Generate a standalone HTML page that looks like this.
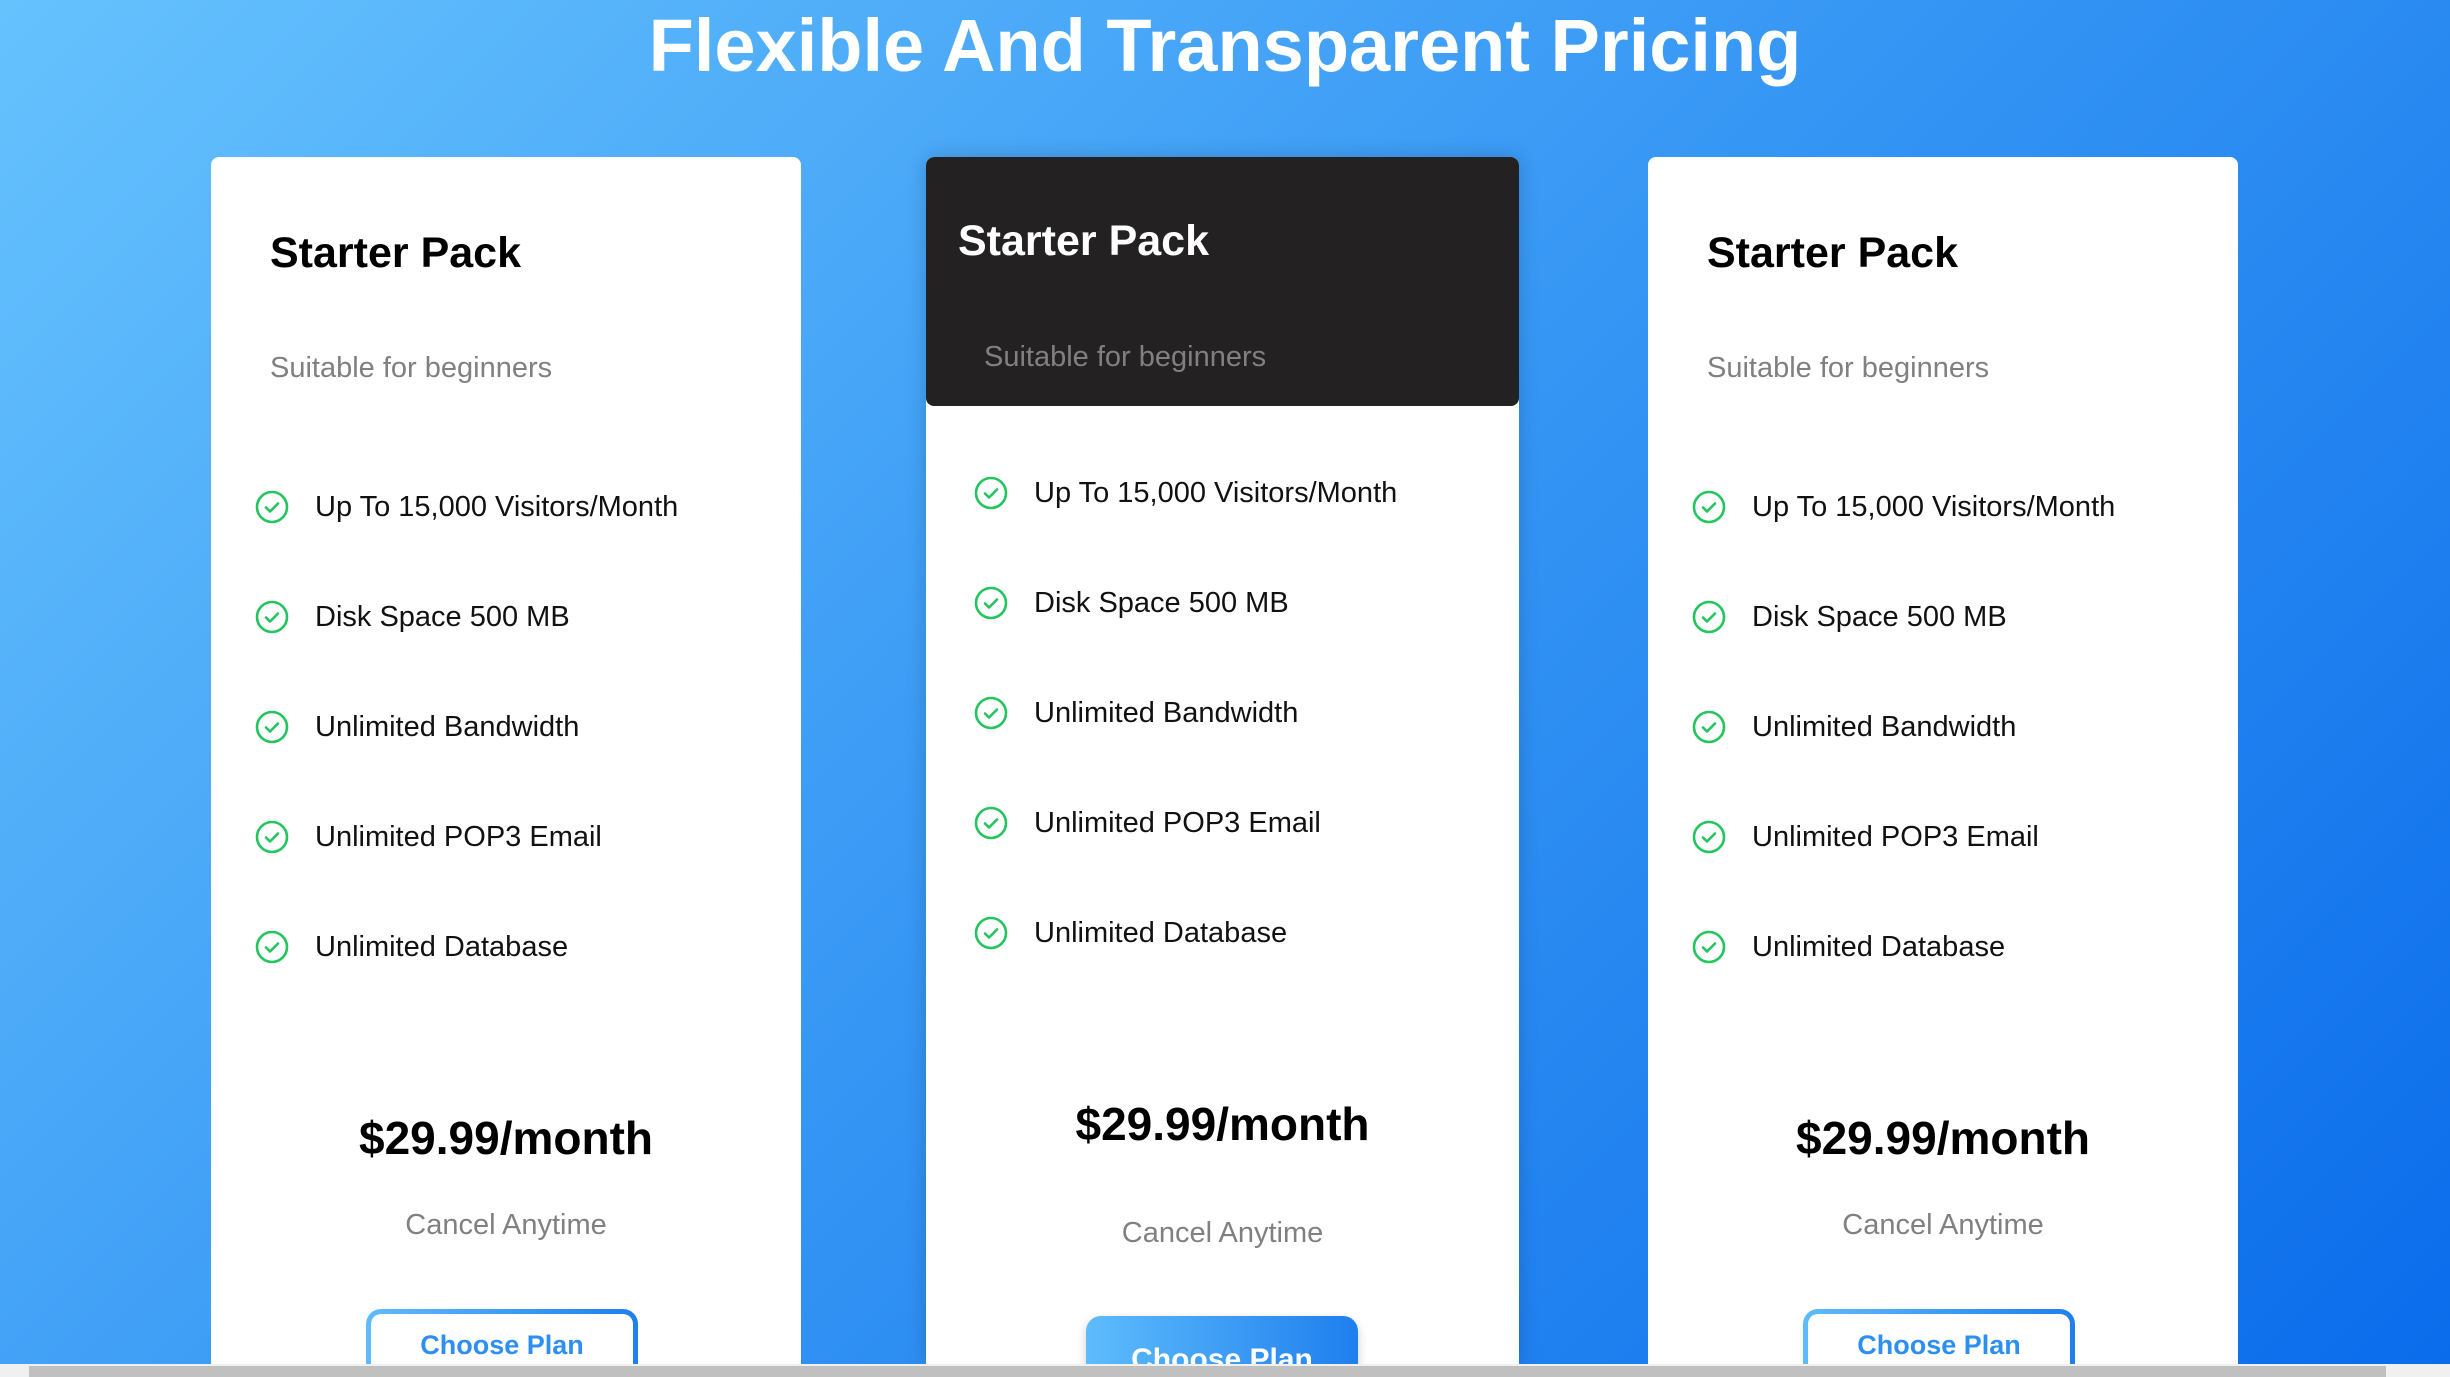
<!DOCTYPE html>
<html><head><style>
*{margin:0;padding:0;box-sizing:border-box}
html,body{width:2450px;height:1377px;overflow:hidden}
body{position:relative;background:linear-gradient(135deg,#66c2fd 0%,#3a9af5 45%,#0a6ceb 100%);font-family:"Liberation Sans",sans-serif}
h1{position:absolute;left:0;width:2450px;top:3px;text-align:center;color:#fff;font-size:74px;font-weight:bold}
.card{position:absolute;top:157px;width:590px;height:1207px;background:#fff;border-radius:8px 8px 0 0;overflow:hidden}
.card .t{position:absolute;left:59px;font-size:43px;font-weight:bold;color:#000}
.card .s{position:absolute;left:59px;font-size:29px;color:#808080}
.feat{position:absolute;left:44px;font-size:29px;color:#111}
.feat svg{position:absolute;left:0;top:-16px}
.feat span{position:absolute;left:60px;top:-15px;white-space:nowrap}
.price{position:absolute;left:0;width:100%;text-align:center;font-size:46px;font-weight:bold;color:#000}
.cancel{position:absolute;left:0;width:100%;text-align:center;font-size:29px;color:#808080}
.btn{position:absolute;width:272px;height:80px;border-radius:15px;padding:5px;background:linear-gradient(90deg,#5ebcfc,#1f7fee)}
.btn div{width:100%;height:100%;background:#fff;border-radius:10px;text-align:center;font-size:27px;font-weight:bold;color:#2d8ff2;padding-top:16px}
.dark{position:absolute;left:0;top:0;width:100%;height:249px;background:#232122;border-radius:8px}
</style></head><body>
<h1>Flexible And Transparent Pricing</h1>

<div class="card" style="left:211px">
 <div class="t" style="top:72px">Starter Pack</div>
 <div class="s" style="top:195px">Suitable for beginners</div>
 <div class="feat" style="top:349px"><svg width="34" height="34" viewBox="0 0 34 34"><circle cx="17" cy="17" r="15" fill="none" stroke="#22c55e" stroke-width="2.6"/><path d="M11 17.5l4 4 8-8" fill="none" stroke="#22c55e" stroke-width="2.6" stroke-linecap="round" stroke-linejoin="round"/></svg><span>Up To 15,000 Visitors/Month</span></div>
 <div class="feat" style="top:459px"><svg width="34" height="34" viewBox="0 0 34 34"><circle cx="17" cy="17" r="15" fill="none" stroke="#22c55e" stroke-width="2.6"/><path d="M11 17.5l4 4 8-8" fill="none" stroke="#22c55e" stroke-width="2.6" stroke-linecap="round" stroke-linejoin="round"/></svg><span>Disk Space 500 MB</span></div>
 <div class="feat" style="top:569px"><svg width="34" height="34" viewBox="0 0 34 34"><circle cx="17" cy="17" r="15" fill="none" stroke="#22c55e" stroke-width="2.6"/><path d="M11 17.5l4 4 8-8" fill="none" stroke="#22c55e" stroke-width="2.6" stroke-linecap="round" stroke-linejoin="round"/></svg><span>Unlimited Bandwidth</span></div>
 <div class="feat" style="top:679px"><svg width="34" height="34" viewBox="0 0 34 34"><circle cx="17" cy="17" r="15" fill="none" stroke="#22c55e" stroke-width="2.6"/><path d="M11 17.5l4 4 8-8" fill="none" stroke="#22c55e" stroke-width="2.6" stroke-linecap="round" stroke-linejoin="round"/></svg><span>Unlimited POP3 Email</span></div>
 <div class="feat" style="top:789px"><svg width="34" height="34" viewBox="0 0 34 34"><circle cx="17" cy="17" r="15" fill="none" stroke="#22c55e" stroke-width="2.6"/><path d="M11 17.5l4 4 8-8" fill="none" stroke="#22c55e" stroke-width="2.6" stroke-linecap="round" stroke-linejoin="round"/></svg><span>Unlimited Database</span></div>
 <div class="price" style="top:954px">$29.99/month</div>
 <div class="cancel" style="top:1052px">Cancel Anytime</div>
 <div class="btn" style="left:155px;top:1152px"><div>Choose Plan</div></div>
</div>

<div class="card" style="left:926px;width:593px;box-shadow:0 0 20px rgba(0,0,0,0.18)">
 <div class="dark"></div>
 <div class="t" style="top:60px;left:32px;color:#fff">Starter Pack</div>
 <div class="s" style="top:184px;left:58px">Suitable for beginners</div>
 <div class="feat" style="top:335px;left:48px"><svg width="34" height="34" viewBox="0 0 34 34"><circle cx="17" cy="17" r="15" fill="none" stroke="#22c55e" stroke-width="2.6"/><path d="M11 17.5l4 4 8-8" fill="none" stroke="#22c55e" stroke-width="2.6" stroke-linecap="round" stroke-linejoin="round"/></svg><span>Up To 15,000 Visitors/Month</span></div>
 <div class="feat" style="top:445px;left:48px"><svg width="34" height="34" viewBox="0 0 34 34"><circle cx="17" cy="17" r="15" fill="none" stroke="#22c55e" stroke-width="2.6"/><path d="M11 17.5l4 4 8-8" fill="none" stroke="#22c55e" stroke-width="2.6" stroke-linecap="round" stroke-linejoin="round"/></svg><span>Disk Space 500 MB</span></div>
 <div class="feat" style="top:555px;left:48px"><svg width="34" height="34" viewBox="0 0 34 34"><circle cx="17" cy="17" r="15" fill="none" stroke="#22c55e" stroke-width="2.6"/><path d="M11 17.5l4 4 8-8" fill="none" stroke="#22c55e" stroke-width="2.6" stroke-linecap="round" stroke-linejoin="round"/></svg><span>Unlimited Bandwidth</span></div>
 <div class="feat" style="top:665px;left:48px"><svg width="34" height="34" viewBox="0 0 34 34"><circle cx="17" cy="17" r="15" fill="none" stroke="#22c55e" stroke-width="2.6"/><path d="M11 17.5l4 4 8-8" fill="none" stroke="#22c55e" stroke-width="2.6" stroke-linecap="round" stroke-linejoin="round"/></svg><span>Unlimited POP3 Email</span></div>
 <div class="feat" style="top:775px;left:48px"><svg width="34" height="34" viewBox="0 0 34 34"><circle cx="17" cy="17" r="15" fill="none" stroke="#22c55e" stroke-width="2.6"/><path d="M11 17.5l4 4 8-8" fill="none" stroke="#22c55e" stroke-width="2.6" stroke-linecap="round" stroke-linejoin="round"/></svg><span>Unlimited Database</span></div>
 <div class="price" style="top:940px">$29.99/month</div>
 <div class="cancel" style="top:1060px">Cancel Anytime</div>
 <div class="btn" style="left:160px;top:1159px;width:272px;height:90px;box-shadow:0 4px 10px rgba(0,0,0,0.2)"><div style="background:transparent;color:#fff;font-size:30px;padding-top:22px">Choose Plan</div></div>
</div>

<div class="card" style="left:1648px">
 <div class="t" style="top:72px">Starter Pack</div>
 <div class="s" style="top:195px">Suitable for beginners</div>
 <div class="feat" style="top:349px"><svg width="34" height="34" viewBox="0 0 34 34"><circle cx="17" cy="17" r="15" fill="none" stroke="#22c55e" stroke-width="2.6"/><path d="M11 17.5l4 4 8-8" fill="none" stroke="#22c55e" stroke-width="2.6" stroke-linecap="round" stroke-linejoin="round"/></svg><span>Up To 15,000 Visitors/Month</span></div>
 <div class="feat" style="top:459px"><svg width="34" height="34" viewBox="0 0 34 34"><circle cx="17" cy="17" r="15" fill="none" stroke="#22c55e" stroke-width="2.6"/><path d="M11 17.5l4 4 8-8" fill="none" stroke="#22c55e" stroke-width="2.6" stroke-linecap="round" stroke-linejoin="round"/></svg><span>Disk Space 500 MB</span></div>
 <div class="feat" style="top:569px"><svg width="34" height="34" viewBox="0 0 34 34"><circle cx="17" cy="17" r="15" fill="none" stroke="#22c55e" stroke-width="2.6"/><path d="M11 17.5l4 4 8-8" fill="none" stroke="#22c55e" stroke-width="2.6" stroke-linecap="round" stroke-linejoin="round"/></svg><span>Unlimited Bandwidth</span></div>
 <div class="feat" style="top:679px"><svg width="34" height="34" viewBox="0 0 34 34"><circle cx="17" cy="17" r="15" fill="none" stroke="#22c55e" stroke-width="2.6"/><path d="M11 17.5l4 4 8-8" fill="none" stroke="#22c55e" stroke-width="2.6" stroke-linecap="round" stroke-linejoin="round"/></svg><span>Unlimited POP3 Email</span></div>
 <div class="feat" style="top:789px"><svg width="34" height="34" viewBox="0 0 34 34"><circle cx="17" cy="17" r="15" fill="none" stroke="#22c55e" stroke-width="2.6"/><path d="M11 17.5l4 4 8-8" fill="none" stroke="#22c55e" stroke-width="2.6" stroke-linecap="round" stroke-linejoin="round"/></svg><span>Unlimited Database</span></div>
 <div class="price" style="top:954px">$29.99/month</div>
 <div class="cancel" style="top:1052px">Cancel Anytime</div>
 <div class="btn" style="left:155px;top:1152px"><div>Choose Plan</div></div>
</div>

<div style="position:absolute;left:0;top:1364px;width:2450px;height:13px;background:#f0f0f0">
 <div style="position:absolute;left:29px;top:2px;width:2357px;height:11px;background:#c0c0c0"></div>
</div>
</body></html>
